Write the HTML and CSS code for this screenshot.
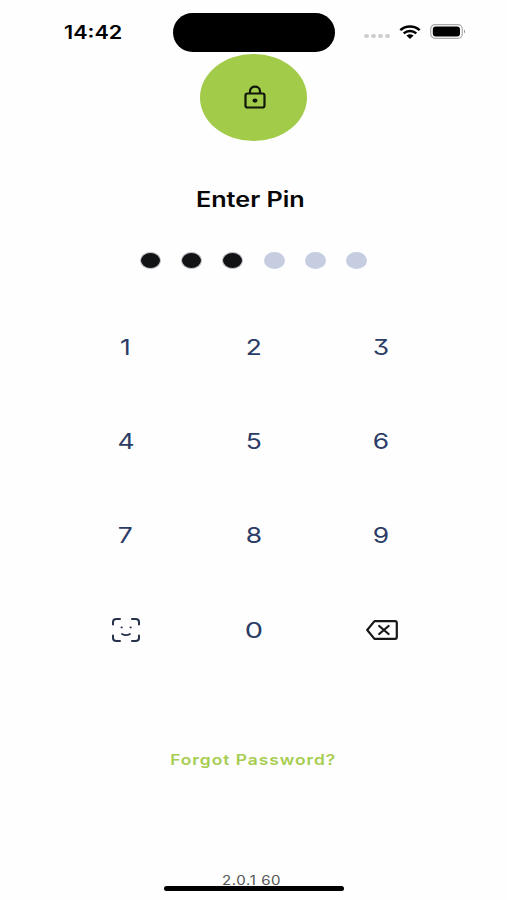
FILE: index.html
```html
<!DOCTYPE html>
<html lang="en">
<head>
<meta charset="UTF-8">
<meta name="viewport" content="width=device-width, initial-scale=1.0">
<title>Enter Pin</title>
<link rel="stylesheet" href="styles.css">
</head>
<body>

<div class="screen">

<!-- Status bar -->
<header class="status-bar">
    <div class="status-left"><span class="time">14:42</span></div>
    <div class="island"></div>
    <div class="status-right">
        <div class="signal"><i></i><i></i><i></i><i></i></div>
        <svg class="wifi" viewBox="0 0 22 14" preserveAspectRatio="none">
            <path d="M1.3 5.2C6.6 .3 15.4 .3 20.7 5.2M4.7 8.4C8.3 5.3 13.7 5.3 17.3 8.4" fill="none" stroke="#000" stroke-width="2.5"/>
            <path d="M7.4 10.6Q11 7.9 14.6 10.6L11 14Z"/>
        </svg>
        <svg class="battery" viewBox="0 0 36 15">
            <rect x=".7" y=".7" width="31.6" height="13.6" rx="4.5" fill="none" stroke="#aaa" stroke-width="1.2"/>
            <rect x="2.8" y="2.5" width="27.2" height="10" rx="3"/>
            <path d="M34 5.5Q36 7.5 34 9.5Z" fill="#888"/>
        </svg>
    </div>
</header>

<main>
    <div class="badge">
        <svg class="lock" viewBox="0 0 22 24" fill="none" stroke="#10160a" stroke-width="2.2">
            <rect x="1.5" y="8.5" width="19" height="14" rx="2"/>
            <path d="M6 8.5V6.2C6 .2 16 .2 16 6.2V8.5"/>
            <ellipse cx="11" cy="15.6" rx="2.5" ry="2.1" fill="#10160a" stroke="none"/>
        </svg>
    </div>

    <h1><span>Enter Pin</span></h1>

    <div class="pin">
        <i class="filled"></i><i class="filled"></i><i class="filled"></i><i></i><i></i><i></i>
    </div>

    <div class="keypad">
        <button><span>1</span></button>
        <button><span>2</span></button>
        <button><span>3</span></button>
        <button><span>4</span></button>
        <button><span>5</span></button>
        <button><span>6</span></button>
        <button><span>7</span></button>
        <button><span>8</span></button>
        <button><span>9</span></button>
        <button aria-label="Face ID">
            <svg class="face" viewBox="0 0 28 24" fill="none" stroke="#26324c" stroke-width="2" stroke-linecap="round">
                <path d="M1 6.5V4Q1 1 4.5 1H8M20 1H23.5Q27 1 27 4V6.5M27 17.5V20Q27 23 23.5 23H20M8 23H4.5Q1 23 1 20V17.5"/>
                <path d="M10 16Q14 18.4 18 16" stroke-width="1.8"/>
                <path d="M9.5 9.4H9.8M18.5 9.4H18.8" stroke-width="1.9"/>
            </svg>
        </button>
        <button><span class="zero">0</span></button>
        <button aria-label="Delete">
            <svg class="delete" viewBox="0 0 32 20" fill="none" stroke="#171717" stroke-width="2.2" stroke-linejoin="round" stroke-linecap="round">
                <path d="M8.5 1.1H29Q30.8 1.1 30.8 3V17Q30.8 18.9 29 18.9H8.5L1.2 10Z"/>
                <path d="M13.2 6L22.6 14M22.6 6L13.2 14"/>
            </svg>
        </button>
    </div>

    <a class="forgot"><span>Forgot Password?</span></a>
</main>

<footer>
    <span class="version">2.0.1 60</span>
    <div class="home-bar"></div>
</footer>

</div>

</body>
</html>
```
FILE: styles.css
```css
body {
    margin: 0;
    background: #fefefe;
    font-family: Inter, "Liberation Sans", sans-serif;
}

.screen {
    width: 507px;
    height: 900px;
    display: flex;
    flex-direction: column;
    overflow: hidden;
}

/* Status bar */
.status-bar {
    display: flex;
    height: 39px;
    padding-top: 13px;
}

.status-left {
    width: 173px;
    display: flex;
    align-items: center;
}

.time {
    margin-left: 64px;
    font-size: 18px;
    font-weight: 600;
    line-height: 38px;
    transform: scaleX(1.2);
    transform-origin: left;
}

.island {
    width: 162px;
    height: 39px;
    border-radius: 20px;
    background: #000;
}

.status-right {
    display: flex;
    align-items: center;
    height: 37px;
    padding-left: 29px;
}

.signal {
    display: flex;
    gap: 2px;
    padding-top: 9px;
}

.signal i {
    width: 5px;
    height: 4px;
    border-radius: 50%;
    background: #ccc;
}

.wifi {
    width: 22px;
    height: 14px;
    margin-left: 9px;
}

.battery {
    width: 36px;
    height: 15px;
    margin-left: 9px;
}

main {
    display: flex;
    flex-direction: column;
    align-items: center;
    padding-top: 2px;
}

.badge {
    width: 107px;
    height: 87px;
    display: flex;
    align-items: center;
    justify-content: center;
    border-radius: 50%;
    background: #a1cb49;
}

.lock {
    width: 22px;
    height: 24px;
    margin-bottom: 2px;
    margin-left: 2px;
}

h1 {
    margin: 44px 0 0 -7px;
    font-size: 21px;
    font-weight: 600;
    line-height: 30px;
    color: #080808;
}

h1 span,
.forgot span,
.version,
.keypad span {
    display: inline-block;
    transform: scaleX(1.2);
}

/* Pin dots */
.pin {
    display: flex;
    gap: 20.2px;
    margin-top: 37px;
}

.pin i {
    box-sizing: border-box;
    width: 21px;
    height: 17px;
    border-radius: 50%;
    background: #c6cde1;
}

.pin .filled {
    border: 1px solid #c3c6cb;
    background: #121314;
}

/* Keypad */
.keypad {
    display: grid;
    grid-template-columns: repeat(3, 127.8px);
    grid-template-rows: repeat(4, 94.2px);
    margin-top: 31px;
}

.keypad button {
    display: flex;
    align-items: center;
    justify-content: center;
    padding: 0;
    border: none;
    background: none;
    color: #2b3c66;
    font-family: inherit;
    font-size: 22px;
    font-feature-settings: "cv09";
}

.keypad .zero {
    transform: scaleX(1.32);
}

.face {
    width: 28px;
    height: 24px;
}

.delete {
    width: 32px;
    height: 20px;
    margin-left: 2px;
}

.forgot {
    margin-top: 73px;
    font-size: 14.5px;
    font-weight: 600;
    letter-spacing: .8px;
    line-height: 20px;
    color: #a6cd4f;
}

/* Version and home indicator */
footer {
    display: flex;
    flex-direction: column;
    align-items: center;
    margin-top: auto;
    padding-bottom: 9px;
}

.version {
    margin: 0 3px -1px 0;
    font-size: 12.5px;
    letter-spacing: .5px;
    line-height: 12px;
    color: #555;
}

.home-bar {
    width: 180px;
    height: 5px;
    border-radius: 3px;
    background: #000;
}
```
